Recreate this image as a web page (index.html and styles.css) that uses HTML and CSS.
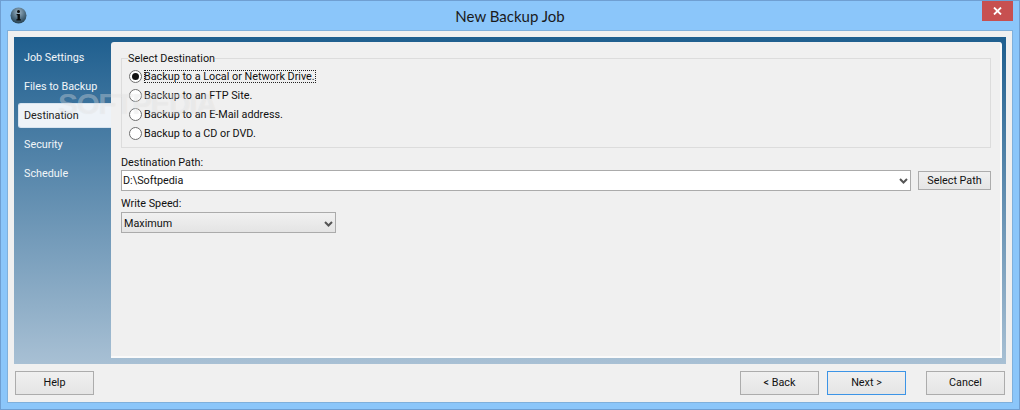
FILE: index.html
```html
<!DOCTYPE html>
<html lang="en">
<head>
    <meta charset="UTF-8">
    <title>New Backup Job</title>
    <link rel="stylesheet" href="styles.css">
</head>
<body>
    <div class="window">
        <div class="titlebar">
            <svg class="appIcon" width="17" height="17" viewBox="0 0 17 17">
                <defs>
                    <radialGradient id="ball" cx="50%" cy="30%" r="70%">
                        <stop offset="0" stop-color="#9fb6c6"/>
                        <stop offset="0.6" stop-color="#4d6b80"/>
                        <stop offset="1" stop-color="#26404f"/>
                    </radialGradient>
                </defs>
                <circle cx="8.5" cy="8.5" r="8" fill="url(#ball)"/>
                <circle cx="8.5" cy="4.6" r="1.5" fill="#0c0c0c"/>
                <path d="M6.6 7h3.3v5.2h1v1.2H6.4v-1.2h1.1V8.200H6.600z" fill="#0c0c0c"/>
            </svg>
            <div class="title">New Backup Job</div>
            <div class="closeBtn">
                <svg width="9" height="8" viewBox="0 0 9 8">
                    <path d="M1 .5l7 7M8 .5l-7 7" stroke="#fff" stroke-width="1.800" fill="none"/>
                </svg>
            </div>
        </div>
        <div class="client">
            <div class="panel">
                <ul class="steps">
                    <li>Job Settings</li>
                    <li>Files to Backup</li>
                    <li class="active">Destination</li>
                    <li>Security</li>
                    <li>Schedule</li>
                </ul>
                <div class="content">
                    <fieldset class="destBox">
                        <legend>Select Destination</legend>
                        <label class="radio"><span class="dot checked"></span><span class="focused">Backup to a Local or Network Drive.</span></label>
                        <label class="radio"><span class="dot"></span><span>Backup to an FTP Site.</span></label>
                        <label class="radio"><span class="dot"></span><span>Backup to an E-Mail address.</span></label>
                        <label class="radio"><span class="dot"></span><span>Backup to a CD or DVD.</span></label>
                    </fieldset>
                    <div class="fieldLabel">Destination Path:</div>
                    <div class="pathRow">
                        <div class="combo">
                            <span>D:\Softpedia</span>
                            <svg class="chev" width="9" height="6" viewBox="0 0 9 6"><path d="M1 1l3.500 3.500L8 1" stroke="#555" stroke-width="2" fill="none"/></svg>
                        </div>
                        <div class="btn selectPath">Select Path</div>
                    </div>
                    <div class="fieldLabel speedLabel">Write Speed:</div>
                    <div class="combo speed">
                        <span>Maximum</span>
                        <svg class="chev" width="9" height="6" viewBox="0 0 9 6"><path d="M1 1l3.500 3.500L8 1" stroke="#555" stroke-width="2" fill="none"/></svg>
                    </div>
                </div>
            </div>
            <div class="footer">
                <div class="btn">Help</div>
                <div class="navBtns">
                    <div class="btn">&lt; Back</div>
                    <div class="btn default">Next &gt;</div>
                    <div class="btn cancel">Cancel</div>
                </div>
            </div>
        </div>
        <div class="watermark">SOFTPEDIA</div>
    </div>
</body>
</html>
```

FILE: styles.css
```css
html, body{
    margin: 0;
    padding: 0;
}
body{
    font-family: "Roboto", "Open Sans", sans-serif;
    font-size: 10.8px;
    color: #111;
}
.window{
    position: relative;
    box-sizing: border-box;
    width: 1020px;
    height: 410px;
    border: 1px solid #6f9fd2;
    background-color: #8bc6fa;
    display: flex;
    flex-direction: column;
    overflow: hidden;
}
.titlebar{
    height: 29px;
    position: relative;
    display: flex;
    justify-content: center;
    padding-top: 6px;
    box-sizing: border-box;
}
.appIcon{
    position: absolute;
    left: 9px;
    top: 6px;
}
.title{
    font-family: "Lato", sans-serif;
    font-size: 15px;
    line-height: 18px;
    color: #1a1a1a;
}
.closeBtn{
    position: absolute;
    right: 6px;
    top: 0;
    width: 31px;
    height: 20px;
    background-color: #c75050;
    display: flex;
    align-items: center;
    justify-content: center;
}
.client{
    flex: 1;
    margin: 0 6px 6px 6px;
    border: 1px solid #7fb0dc;
    background-color: #f0f0f0;
    padding: 6px 6px 0 6px;
}
.panel{
    height: 327px;
    box-sizing: border-box;
    padding: 5px 4px 6px 0;
    background: linear-gradient(#1f5f8f, #a8c0d4);
    display: flex;
}
.steps{
    list-style: none;
    margin: 0;
    padding: 2px 0 0 4px;
    width: 93px;
    flex: none;
}
.steps li{
    height: 29px;
    line-height: 28px;
    box-sizing: border-box;
    padding-left: 6px;
    color: #f2f6f9;
}
.steps li.active{
    height: 25px;
    margin: 1px 0 3px;
    background-color: #eef3f8;
    color: #222;
    border-radius: 3px 0 0 3px;
    border: 1px solid #d7e4f0;
    border-right: none;
    padding-left: 5px;
    line-height: 23px;
}
.content{
    flex: 1;
    background-color: #f0f0f0;
    border-radius: 3px 3px 0 0;
    border-right: 2px solid #fafafa;
    border-bottom: 2px solid #fafafa;
    box-sizing: border-box;
    padding: 8px 9px 0 10px;
}
.destBox{
    margin: 0;
    padding: 1px 0 0 7px;
    height: 98px;
    box-sizing: border-box;
    border: 1px solid #dcdcdc;
}
.destBox legend{
    padding: 2px 0 0;
    margin-left: -1px;
    line-height: 14px;
}
.radio{
    display: flex;
    align-items: center;
    height: 19px;
}
.focused{
    outline: 1px dotted #222;
    outline-offset: -1px;
    padding-right: 1px;
}
.dot{
    width: 13px;
    height: 13px;
    box-sizing: border-box;
    border: 1px solid #6f6f6f;
    border-radius: 50%;
    background-color: #fff;
    margin-right: 2px;
    flex: none;
    position: relative;
}
.dot.checked::after{
    content: "";
    position: absolute;
    left: 2px;
    top: 2px;
    width: 7px;
    height: 7px;
    border-radius: 50%;
    background-color: #111;
}
.fieldLabel{
    margin-top: 6px;
    padding-top: 2px;
    line-height: 14px;
}
.pathRow{
    display: flex;
    align-items: center;
    justify-content: space-between;
    margin-top: 0;
}
.combo{
    flex: 1;
    height: 21px;
    box-sizing: border-box;
    border: 1px solid #ababab;
    background-color: #fff;
    display: flex;
    align-items: center;
    justify-content: space-between;
    padding: 0 2px 0 1px;
}
.speedLabel{
    margin-top: 4px;
}
.combo.speed{
    width: 215px;
    flex: none;
    margin-top: 1px;
    background: linear-gradient(#f1f1f1, #e4e4e4);
    padding: 2px 2px 0 2px;
}
.btn{
    width: 79px;
    height: 24px;
    line-height: 22px;
    box-sizing: border-box;
    border: 1px solid #acacac;
    background: linear-gradient(#f0f0f0, #e5e5e5);
    text-align: center;
    color: #111;
}
.btn.default{
    border-color: #3c94e6;
}
.btn.selectPath{
    width: 73px;
    height: 19px;
    line-height: 18px;
    margin-left: 7px;
}
.footer{
    display: flex;
    justify-content: space-between;
    padding: 7px 1px 0 1px;
}
.navBtns{
    display: flex;
    gap: 8px;
}
.btn.cancel{
    margin-left: 12px;
}
.watermark{
    position: absolute;
    left: 57px;
    top: 86px;
    font-family: "Liberation Sans", sans-serif;
    font-weight: bold;
    font-size: 30px;
    letter-spacing: -1.5px;
    color: rgba(255, 255, 255, 0.33);
    text-shadow: 0 0 1px rgba(0, 0, 0, 0.07);
    pointer-events: none;
}
```
